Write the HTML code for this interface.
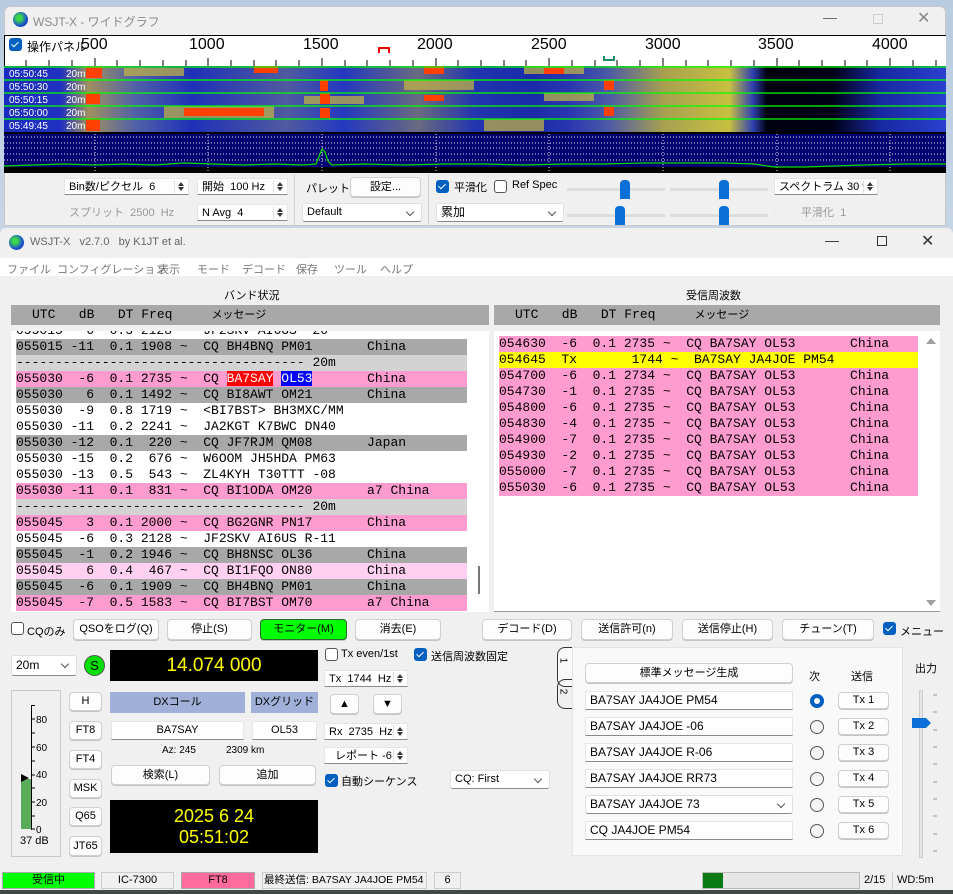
<!DOCTYPE html>
<html style="overflow:hidden"><head><meta charset="utf-8">
<style>
*{box-sizing:border-box;margin:0;padding:0}
body{width:953px;height:894px;overflow:hidden;position:relative;background:linear-gradient(180deg,#b8cbe0,#cfdbe8 40%,#a9bccf);font-family:"Liberation Sans","Noto Sans CJK JP",sans-serif;font-size:11px;color:#000}
.a{position:absolute}
.t{position:absolute;white-space:nowrap}
.btn{position:absolute;background:#fdfdfd;border:1px solid #d0d0d0;border-radius:4px;text-align:center;font-size:11px;line-height:19px;box-shadow:0 1px 0 #c4c4c4;white-space:nowrap;overflow:hidden}
.fld{position:absolute;background:#fff;border:1px solid #e5e5e5;border-bottom:1px solid #8a8a8a;font-size:11px;line-height:16px;padding-left:4px;white-space:nowrap;overflow:hidden}
.spin{position:absolute;right:1px;top:1px;width:13px;bottom:1px;border-left:1px solid #e0e0e0;background:#fff}
.spin:before{content:"";position:absolute;left:3px;top:2px;border:3.5px solid transparent;border-bottom:4px solid #333;border-top:0}
.spin:after{content:"";position:absolute;left:3px;bottom:2px;border:3.5px solid transparent;border-top:4px solid #333;border-bottom:0}
.chk{position:absolute;width:13px;height:13px;border-radius:3px;background:#0060c0}
.chk:after{content:"";position:absolute;left:4px;top:2px;width:3px;height:6px;border:solid #fff;border-width:0 1.5px 1.5px 0;transform:rotate(45deg)}
.unchk{position:absolute;width:13px;height:13px;border-radius:3px;border:1px solid #555;background:#fff}
.cmb{position:absolute;background:#fff;border:1px solid #e0e0e0;border-bottom:1px solid #8a8a8a;border-radius:3px;font-size:11px;line-height:17px;padding-left:4px;white-space:nowrap}
.cmb:after{content:"";position:absolute;right:8px;top:5px;width:5px;height:5px;border:solid #555;border-width:0 1px 1px 0;transform:rotate(45deg)}
.mono{font-family:"Liberation Mono",monospace;font-size:13px;white-space:pre;line-height:16px;height:16px}
.r{position:absolute;left:16px;width:451px}
.rr{position:absolute;left:499px;width:419px}
.gy{background:#a8a8a8}.pk{background:#ff9ccf}.lp{background:#ffd0f0}.sp{background:#d3d3d3}.yl{background:#ffff00}
.m{color:#777;top:261px}
</style></head><body>

<div class="a" style="left:4px;top:6px;width:942px;height:220px;background:#f0f0f0;border:1px solid #c8c8c8;border-radius:6px 6px 0 0"></div>
<div class="a" style="left:13px;top:12px;width:15px;height:15px;border-radius:50%;background:radial-gradient(circle at 40% 40%,#3dd84a 20%,#1a50d0 60%,#102a80)"></div>
<div class="t" style="left:33px;top:13px;color:#8a8a8a;font-size:12px">WSJT-X - ワイドグラフ</div>
<div class="t" style="left:823px;top:9px;color:#666;font-size:14px">—</div>
<div class="a" style="left:873px;top:14px;width:10px;height:10px;border:1px solid #ccc"></div>
<div class="t" style="left:917px;top:8px;color:#888;font-size:16px">✕</div>

<div class="a" style="left:4px;top:35px;width:942px;height:32px;background:#fff;border-top:1px solid #000;border-left:1px solid #000"></div>
<div class="chk" style="left:9px;top:38px"></div>
<div class="t" style="left:27px;top:38px;font-size:12px">操作パネル</div>
<div class="t" style="left:81px;top:36px;font-size:16px">500</div>
<div class="t" style="left:189px;top:36px;font-size:16px">1000</div>
<div class="t" style="left:303px;top:36px;font-size:16px">1500</div>
<div class="t" style="left:417px;top:36px;font-size:16px">2000</div>
<div class="t" style="left:531px;top:36px;font-size:16px">2500</div>
<div class="t" style="left:645px;top:36px;font-size:16px">3000</div>
<div class="t" style="left:758px;top:36px;font-size:16px">3500</div>
<div class="t" style="left:872px;top:36px;font-size:16px">4000</div>
<div class="a" style="left:378px;top:47px;width:12px;height:6px;border:2px solid #e00;border-bottom:0"></div>
<div class="a" style="left:603px;top:56px;width:12px;height:5px;border:2px solid #1a8a60;border-top:0"></div>
<svg class="a" style="left:4px;top:58px" width="942" height="9">
<g stroke="#000" stroke-width="1">
<line x1="22" y1="2" x2="22" y2="9"/><line x1="45" y1="2" x2="45" y2="9"/><line x1="68" y1="2" x2="68" y2="9"/><line x1="91" y1="0" x2="91" y2="9"/><line x1="113" y1="2" x2="113" y2="9"/><line x1="136" y1="2" x2="136" y2="9"/><line x1="159" y1="2" x2="159" y2="9"/><line x1="182" y1="2" x2="182" y2="9"/><line x1="204" y1="0" x2="204" y2="9"/><line x1="227" y1="2" x2="227" y2="9"/><line x1="250" y1="2" x2="250" y2="9"/><line x1="272" y1="2" x2="272" y2="9"/><line x1="295" y1="2" x2="295" y2="9"/><line x1="318" y1="0" x2="318" y2="9"/><line x1="341" y1="2" x2="341" y2="9"/><line x1="363" y1="2" x2="363" y2="9"/><line x1="386" y1="2" x2="386" y2="9"/><line x1="409" y1="2" x2="409" y2="9"/><line x1="432" y1="0" x2="432" y2="9"/><line x1="454" y1="2" x2="454" y2="9"/><line x1="477" y1="2" x2="477" y2="9"/><line x1="500" y1="2" x2="500" y2="9"/><line x1="522" y1="2" x2="522" y2="9"/><line x1="545" y1="0" x2="545" y2="9"/><line x1="568" y1="2" x2="568" y2="9"/><line x1="591" y1="2" x2="591" y2="9"/><line x1="613" y1="2" x2="613" y2="9"/><line x1="636" y1="2" x2="636" y2="9"/><line x1="659" y1="0" x2="659" y2="9"/><line x1="682" y1="2" x2="682" y2="9"/><line x1="704" y1="2" x2="704" y2="9"/><line x1="727" y1="2" x2="727" y2="9"/><line x1="750" y1="2" x2="750" y2="9"/><line x1="773" y1="0" x2="773" y2="9"/><line x1="795" y1="2" x2="795" y2="9"/><line x1="818" y1="2" x2="818" y2="9"/><line x1="841" y1="2" x2="841" y2="9"/><line x1="863" y1="2" x2="863" y2="9"/><line x1="886" y1="0" x2="886" y2="9"/><line x1="909" y1="2" x2="909" y2="9"/><line x1="932" y1="2" x2="932" y2="9"/>
</g></svg>

<svg class="a" style="left:4px;top:66px" width="942" height="107">
<defs>
<linearGradient id="wf" x1="0" x2="1">
<stop offset="0" stop-color="#1a2cc0"/><stop offset="0.06" stop-color="#2030c0"/>
<stop offset="0.09" stop-color="#a09060"/><stop offset="0.14" stop-color="#5060a8"/>
<stop offset="0.2" stop-color="#2030b8"/><stop offset="0.3" stop-color="#505aa0"/>
<stop offset="0.36" stop-color="#2438c0"/><stop offset="0.44" stop-color="#6a6a80"/>
<stop offset="0.5" stop-color="#2234b0"/><stop offset="0.56" stop-color="#1a2aa8"/>
<stop offset="0.6" stop-color="#2a36b0"/><stop offset="0.64" stop-color="#4a58a8"/>
<stop offset="0.7" stop-color="#a8a050"/><stop offset="0.77" stop-color="#c8c040"/>
<stop offset="0.795" stop-color="#3040b0"/><stop offset="0.81" stop-color="#000010"/>
<stop offset="0.88" stop-color="#000018"/><stop offset="0.93" stop-color="#1828a0"/>
<stop offset="1" stop-color="#2a40d0"/></linearGradient>
</defs>
<rect x="0" y="0" width="942" height="66" fill="url(#wf)"/>
<g fill="#c8b840" opacity="0.7">
<rect x="160" y="40" width="110" height="12"/><rect x="400" y="14" width="70" height="10"/><rect x="520" y="0" width="60" height="8"/><rect x="540" y="27" width="50" height="8"/><rect x="120" y="2" width="60" height="8"/><rect x="300" y="30" width="60" height="8"/><rect x="480" y="53" width="60" height="12"/>
</g>
<g fill="#ff4000">
<rect x="82" y="1" width="16" height="11"/><rect x="82" y="27" width="14" height="11"/><rect x="82" y="53" width="14" height="12"/><rect x="180" y="42" width="80" height="8"/><rect x="316" y="27" width="10" height="11"/><rect x="316" y="14" width="8" height="11"/><rect x="316" y="42" width="10" height="10"/><rect x="420" y="0" width="20" height="8"/><rect x="420" y="29" width="20" height="6"/><rect x="540" y="2" width="20" height="6"/><rect x="600" y="14" width="10" height="10"/><rect x="600" y="41" width="10" height="9"/><rect x="250" y="0" width="24" height="7"/>
</g>
<g stroke="#00ff00" stroke-width="1.2"><line x1="0" y1="1" x2="942" y2="1"/><line x1="0" y1="14" x2="942" y2="14"/><line x1="0" y1="27" x2="942" y2="27"/><line x1="0" y1="40" x2="942" y2="40"/><line x1="0" y1="53" x2="942" y2="53"/></g>
<g fill="#fff" font-family="Liberation Sans" font-size="10"><text x="5" y="11">05:50:45</text><text x="5" y="24">05:50:30</text><text x="5" y="37">05:50:15</text><text x="5" y="50">05:50:00</text><text x="5" y="63">05:49:45</text>
<text x="62" y="11">20m</text><text x="62" y="24">20m</text><text x="62" y="37">20m</text><text x="62" y="50">20m</text><text x="62" y="63">20m</text></g>
<rect x="0" y="66" width="942" height="41" fill="#000"/>
<rect x="0" y="68" width="942" height="33" fill="#000070"/>
<g stroke="#fff" stroke-width="1" stroke-dasharray="1,2" opacity="0.9"><line x1="0" y1="71" x2="942" y2="71"/><line x1="0" y1="77" x2="942" y2="77"/><line x1="0" y1="82" x2="942" y2="82"/><line x1="0" y1="88" x2="942" y2="88"/><line x1="0" y1="94" x2="942" y2="94"/>
<line x1="91" y1="68" x2="91" y2="107"/><line x1="204" y1="68" x2="204" y2="107"/><line x1="318" y1="68" x2="318" y2="107"/><line x1="432" y1="68" x2="432" y2="107"/><line x1="545" y1="68" x2="545" y2="107"/><line x1="659" y1="68" x2="659" y2="107"/><line x1="773" y1="68" x2="773" y2="107"/><line x1="886" y1="68" x2="886" y2="107"/></g>
<polyline fill="none" stroke="#00e000" stroke-width="1.2" points="0,100 30,99 60,98 90,99 120,98 150,99 180,97 210,98 240,99 270,98 300,99 312,98 316,88 318,83 321,86 324,95 328,99 360,98 400,99 440,98 480,98 520,99 560,98 600,98 640,97 680,97 720,97 750,98 770,101 800,101 830,100 860,99 900,98 942,98"/>
</svg>

<div class="fld" style="left:64px;top:178px;width:125px;height:17px">Bin数/ピクセル &nbsp;6<span class="spin"></span></div>
<div class="fld" style="left:64px;top:204px;width:125px;height:17px;color:#999;border-color:#f0f0f0;background:#f0f0f0">スプリット &nbsp;2500 &nbsp;Hz</div>
<div class="fld" style="left:197px;top:178px;width:91px;height:17px">開始 &nbsp;100 Hz<span class="spin"></span></div>
<div class="fld" style="left:197px;top:204px;width:91px;height:17px">N Avg &nbsp;4<span class="spin"></span></div>
<div class="a" style="left:294px;top:174px;width:1px;height:52px;background:#d0d0d0"></div>
<div class="t" style="left:306px;top:180px">パレット</div>
<div class="btn" style="left:350px;top:177px;width:71px;height:20px">設定...</div>
<div class="cmb" style="left:302px;top:203px;width:120px;height:19px">Default</div>
<div class="a" style="left:428px;top:174px;width:1px;height:52px;background:#d0d0d0"></div>
<div class="chk" style="left:436px;top:180px"></div>
<div class="t" style="left:454px;top:179px">平滑化</div>
<div class="unchk" style="left:494px;top:180px"></div>
<div class="t" style="left:512px;top:179px">Ref Spec</div>
<div class="cmb" style="left:436px;top:203px;width:128px;height:19px;font-size:12px">累加</div>
<div class="a" style="left:567px;top:188px;width:98px;height:3px;background:#ddd"></div>
<div class="a" style="left:670px;top:188px;width:98px;height:3px;background:#ddd"></div>
<div class="a" style="left:567px;top:214px;width:98px;height:3px;background:#ddd"></div>
<div class="a" style="left:670px;top:214px;width:98px;height:3px;background:#ddd"></div>
<div class="a" style="left:620px;top:180px;width:10px;height:19px;background:#0a6fd6;border-radius:4px 4px 0 0"></div>
<div class="a" style="left:719px;top:180px;width:10px;height:19px;background:#0a6fd6;border-radius:4px 4px 0 0"></div>
<div class="a" style="left:615px;top:206px;width:10px;height:19px;background:#0a6fd6;border-radius:4px 4px 0 0"></div>
<div class="a" style="left:719px;top:206px;width:10px;height:19px;background:#0a6fd6;border-radius:4px 4px 0 0"></div>
<div class="fld" style="left:774px;top:178px;width:104px;height:17px">スペクトラム 30 %<span class="spin"></span></div>
<div class="fld" style="left:774px;top:204px;width:104px;height:17px;color:#999;background:#f0f0f0;border-color:#ececec;padding-left:26px">平滑化 &nbsp;1</div>

<div class="a" style="left:0;top:228px;width:953px;height:666px;background:#f0f0f0;border-radius:6px 6px 0 0"></div>
<div class="a" style="left:9px;top:235px;width:15px;height:15px;border-radius:50%;background:radial-gradient(circle at 40% 40%,#3dd84a 20%,#1a50d0 60%,#102a80)"></div>
<div class="t" style="left:30px;top:236px;color:#666;font-size:11px">WSJT-X &nbsp; v2.7.0 &nbsp; by K1JT et al.</div>
<div class="t" style="left:825px;top:232px;color:#333;font-size:14px">—</div>
<div class="a" style="left:877px;top:236px;width:10px;height:10px;border:1px solid #333"></div>
<div class="t" style="left:921px;top:231px;color:#333;font-size:16px">✕</div>
<div class="a" style="left:0;top:258px;width:953px;height:18px;background:#fff"></div>
<div class="t m" style="left:7px">ファイル</div>
<div class="t m" style="left:57px">コンフィグレーション</div>
<div class="t m" style="left:158px">表示</div>
<div class="t m" style="left:197px">モード</div>
<div class="t m" style="left:242px">デコード</div>
<div class="t m" style="left:296px">保存</div>
<div class="t m" style="left:334px">ツール</div>
<div class="t m" style="left:380px">ヘルプ</div>

<div class="t" style="left:224px;top:287px">バンド状況</div>
<div class="t" style="left:686px;top:287px">受信周波数</div>
<div class="a mono" style="left:11px;top:305px;width:478px;height:20px;background:#a8a8a8;line-height:20px;padding-left:21px">UTC   dB   DT Freq     <span style="font-family:'Liberation Sans','Noto Sans CJK JP',sans-serif;font-size:11px">メッセージ</span></div>
<div class="a mono" style="left:494px;top:305px;width:446px;height:20px;background:#a8a8a8;line-height:20px;padding-left:21px">UTC   dB   DT Freq     <span style="font-family:'Liberation Sans','Noto Sans CJK JP',sans-serif;font-size:11px">メッセージ</span></div>

<div class="a" style="left:11px;top:331px;width:478px;height:281px;background:#fff;overflow:hidden">
<div style="position:absolute;left:-11px;top:-331px;width:500px;height:1000px">
<div class="r mono" style="top:323px">055015  -6  0.3 2128 ~  JF2SKV AI6US  20</div>
<div class="r mono gy" style="top:339px">055015 -11  0.1 1908 ~  CQ BH4BNQ PM01       China</div>
<div class="r mono sp" style="top:355px">------------------------------------- 20m</div>
<div class="r mono pk" style="top:371px">055030  -6  0.1 2735 ~  CQ <span style="background:#f00;color:#fff">BA7SAY</span> <span style="background:#00f;color:#fff">OL53</span>       China</div>
<div class="r mono gy" style="top:387px">055030   6  0.1 1492 ~  CQ BI8AWT OM21       China</div>
<div class="r mono" style="top:403px">055030  -9  0.8 1719 ~  &lt;BI7BST&gt; BH3MXC/MM</div>
<div class="r mono" style="top:419px">055030 -11  0.2 2241 ~  JA2KGT K7BWC DN40</div>
<div class="r mono gy" style="top:435px">055030 -12  0.1  220 ~  CQ JF7RJM QM08       Japan</div>
<div class="r mono" style="top:451px">055030 -15  0.2  676 ~  W6OOM JH5HDA PM63</div>
<div class="r mono" style="top:467px">055030 -13  0.5  543 ~  ZL4KYH T30TTT -08</div>
<div class="r mono pk" style="top:483px">055030 -11  0.1  831 ~  CQ BI1ODA OM20       a7 China</div>
<div class="r mono sp" style="top:499px">------------------------------------- 20m</div>
<div class="r mono pk" style="top:515px">055045   3  0.1 2000 ~  CQ BG2GNR PN17       China</div>
<div class="r mono" style="top:531px">055045  -6  0.3 2128 ~  JF2SKV AI6US R-11</div>
<div class="r mono gy" style="top:547px">055045  -1  0.2 1946 ~  CQ BH8NSC OL36       China</div>
<div class="r mono lp" style="top:563px">055045   6  0.4  467 ~  CQ BI1FQO ON80       China</div>
<div class="r mono gy" style="top:579px">055045  -6  0.1 1909 ~  CQ BH4BNQ PM01       China</div>
<div class="r mono pk" style="top:595px">055045  -7  0.5 1583 ~  CQ BI7BST OM70       a7 China</div>
</div>
<div class="a" style="left:467px;top:235px;width:2px;height:28px;background:#777"></div>
</div>

<div class="a" style="left:494px;top:331px;width:446px;height:281px;background:#fff;border-bottom:1px solid #999"></div>
<div class="rr mono pk" style="top:336px">054630  -6  0.1 2735 ~  CQ BA7SAY OL53       China</div>
<div class="rr mono yl" style="top:352px">054645  Tx       1744 ~  BA7SAY JA4JOE PM54</div>
<div class="rr mono pk" style="top:368px">054700  -6  0.1 2734 ~  CQ BA7SAY OL53       China</div>
<div class="rr mono pk" style="top:384px">054730  -1  0.1 2735 ~  CQ BA7SAY OL53       China</div>
<div class="rr mono pk" style="top:400px">054800  -6  0.1 2735 ~  CQ BA7SAY OL53       China</div>
<div class="rr mono pk" style="top:416px">054830  -4  0.1 2735 ~  CQ BA7SAY OL53       China</div>
<div class="rr mono pk" style="top:432px">054900  -7  0.1 2735 ~  CQ BA7SAY OL53       China</div>
<div class="rr mono pk" style="top:448px">054930  -2  0.1 2735 ~  CQ BA7SAY OL53       China</div>
<div class="rr mono pk" style="top:464px">055000  -7  0.1 2735 ~  CQ BA7SAY OL53       China</div>
<div class="rr mono pk" style="top:480px">055030  -6  0.1 2735 ~  CQ BA7SAY OL53       China</div>
<div class="a" style="left:926px;top:338px;border:5px solid transparent;border-bottom:6px solid #a0a0a0;border-top:0"></div>
<div class="a" style="left:926px;top:600px;border:5px solid transparent;border-top:6px solid #a0a0a0;border-bottom:0"></div>

<div class="unchk" style="left:11px;top:622px"></div>
<div class="t" style="left:27px;top:623px">CQのみ</div>
<div class="btn" style="left:73px;top:619px;width:86px;height:21px">QSOをログ(Q)</div>
<div class="btn" style="left:167px;top:619px;width:85px;height:21px">停止(S)</div>
<div class="btn" style="left:260px;top:619px;width:87px;height:21px;background:#00ff00;border:1px solid #2a6a2a">モニター(M)</div>
<div class="btn" style="left:355px;top:619px;width:86px;height:21px">消去(E)</div>
<div class="btn" style="left:482px;top:619px;width:90px;height:21px">デコード(D)</div>
<div class="btn" style="left:581px;top:619px;width:92px;height:21px">送信許可(n)</div>
<div class="btn" style="left:682px;top:619px;width:91px;height:21px">送信停止(H)</div>
<div class="btn" style="left:782px;top:619px;width:92px;height:21px">チューン(T)</div>
<div class="chk" style="left:883px;top:622px"></div>
<div class="t" style="left:900px;top:623px">メニュー</div>

<div class="cmb" style="left:11px;top:655px;width:66px;height:21px;line-height:19px;font-size:12px">20m</div>
<div class="a" style="left:84px;top:655px;width:21px;height:21px;border-radius:50%;background:#00e000;border:1px solid #555;text-align:center;line-height:19px;font-size:13px">S</div>
<div class="a" style="left:110px;top:650px;width:208px;height:31px;background:#000;color:#ffff00;font-size:19px;text-align:center;line-height:31px">14.074 000</div>
<div class="a" style="left:11px;top:690px;width:50px;height:167px;border:1px solid #c8c8c8;background:#f0f0f0"></div>
<div class="a" style="left:21px;top:779px;width:10px;height:50px;background:#5aab5a"></div>
<div class="a" style="left:21px;top:774px;border:4px solid transparent;border-left:8px solid #000"></div>
<div class="a" style="left:31px;top:705px;width:1px;height:125px;background:#000"></div>
<svg class="a" style="left:31px;top:705px" width="30" height="130"><g stroke="#000"><line x1="0" y1="0.5" x2="4" y2="0.5"/><line x1="0" y1="14" x2="4" y2="14"/><line x1="0" y1="28" x2="4" y2="28"/><line x1="0" y1="42" x2="4" y2="42"/><line x1="0" y1="56" x2="4" y2="56"/><line x1="0" y1="70" x2="4" y2="70"/><line x1="0" y1="83" x2="4" y2="83"/><line x1="0" y1="97" x2="4" y2="97"/><line x1="0" y1="111" x2="4" y2="111"/><line x1="0" y1="124" x2="4" y2="124"/></g>
<g font-family="Liberation Sans" font-size="10"><text x="5" y="18">80</text><text x="5" y="46">60</text><text x="5" y="73">40</text><text x="5" y="101">20</text><text x="5" y="128">0</text></g></svg>
<div class="t" style="left:20px;top:835px">37 dB</div>
<div class="btn" style="left:69px;top:692px;width:33px;height:19px;line-height:17px">H</div>
<div class="btn" style="left:69px;top:721px;width:33px;height:19px;line-height:17px">FT8</div>
<div class="btn" style="left:69px;top:750px;width:33px;height:19px;line-height:17px">FT4</div>
<div class="btn" style="left:69px;top:779px;width:33px;height:19px;line-height:17px">MSK</div>
<div class="btn" style="left:69px;top:807px;width:33px;height:19px;line-height:17px">Q65</div>
<div class="btn" style="left:69px;top:836px;width:33px;height:20px;line-height:18px">JT65</div>
<div class="a" style="left:110px;top:692px;width:135px;height:21px;background:#a0b0d8;text-align:center;line-height:21px">DXコール</div>
<div class="a" style="left:251px;top:692px;width:67px;height:21px;background:#a0b0d8;text-align:center;line-height:21px">DXグリッド</div>
<div class="fld" style="left:111px;top:721px;width:133px;height:19px;text-align:center;padding:0">BA7SAY</div>
<div class="fld" style="left:252px;top:721px;width:65px;height:19px;text-align:center;padding:0">OL53</div>
<div class="t" style="left:162px;top:745px;font-size:10px">Az: 245</div>
<div class="t" style="left:226px;top:745px;font-size:10px">2309 km</div>
<div class="btn" style="left:111px;top:765px;width:99px;height:20px">検索(L)</div>
<div class="btn" style="left:219px;top:765px;width:97px;height:20px">追加</div>
<div class="a" style="left:110px;top:800px;width:208px;height:53px;background:#000;color:#ffff00;font-size:18px;text-align:center;line-height:21px;padding-top:6px">2025 6 24<br>05:51:02</div>

<div class="unchk" style="left:325px;top:648px"></div>
<div class="t" style="left:341px;top:648px">Tx even/1st</div>
<div class="chk" style="left:414px;top:648px"></div>
<div class="t" style="left:431px;top:648px">送信周波数固定</div>
<div class="fld" style="left:324px;top:670px;width:84px;height:17px">Tx &nbsp;1744 &nbsp;Hz<span class="spin"></span></div>
<div class="btn" style="left:330px;top:694px;width:29px;height:20px;font-size:11px">▲</div>
<div class="btn" style="left:373px;top:694px;width:29px;height:20px;font-size:11px">▼</div>
<div class="fld" style="left:324px;top:723px;width:84px;height:17px">Rx &nbsp;2735 &nbsp;Hz<span class="spin"></span></div>
<div class="fld" style="left:324px;top:747px;width:84px;height:17px;padding-left:10px">レポート -6<span class="spin"></span></div>
<div class="chk" style="left:325px;top:774px"></div>
<div class="t" style="left:341px;top:773px">自動シーケンス</div>
<div class="cmb" style="left:450px;top:770px;width:100px;height:19px">CQ: First</div>

<div class="a" style="left:557px;top:647px;width:15px;height:40px;border:1px solid #333;border-right:0;border-radius:8px 0 0 8px;background:#f9f9f9"></div>
<div class="a" style="left:557px;top:679px;width:15px;height:30px;border:1px solid #333;border-right:0;border-radius:8px 0 0 8px"></div>
<div class="t" style="left:560px;top:655px;font-size:10px;transform:rotate(90deg)">1</div>
<div class="t" style="left:560px;top:686px;font-size:10px;transform:rotate(90deg)">2</div>
<div class="a" style="left:572px;top:647px;width:331px;height:209px;background:#f9f9f9;border:1px solid #e4e4e4"></div>
<div class="btn" style="left:585px;top:663px;width:208px;height:20px">標準メッセージ生成</div>
<div class="t" style="left:809px;top:668px">次</div>
<div class="t" style="left:851px;top:668px">送信</div>
<div class="fld" style="left:585px;top:691px;width:208px;height:19px;font-size:12px">BA7SAY JA4JOE PM54</div>
<div class="fld" style="left:585px;top:717px;width:208px;height:19px;font-size:12px">BA7SAY JA4JOE -06</div>
<div class="fld" style="left:585px;top:743px;width:208px;height:19px;font-size:12px">BA7SAY JA4JOE R-06</div>
<div class="fld" style="left:585px;top:769px;width:208px;height:19px;font-size:12px">BA7SAY JA4JOE RR73</div>
<div class="cmb" style="left:585px;top:795px;width:208px;height:19px;font-size:12px">BA7SAY JA4JOE 73</div>
<div class="fld" style="left:585px;top:821px;width:208px;height:19px;font-size:12px">CQ JA4JOE PM54</div>
<div class="a" style="left:810px;top:694px;width:14px;height:14px;border-radius:50%;background:#0060c0"><div style="position:absolute;left:4px;top:4px;width:6px;height:6px;border-radius:50%;background:#fff"></div></div>
<div class="a" style="left:810px;top:720px;width:14px;height:14px;border-radius:50%;border:1px solid #555;background:#f5f5f5"></div>
<div class="a" style="left:810px;top:746px;width:14px;height:14px;border-radius:50%;border:1px solid #555;background:#f5f5f5"></div>
<div class="a" style="left:810px;top:772px;width:14px;height:14px;border-radius:50%;border:1px solid #555;background:#f5f5f5"></div>
<div class="a" style="left:810px;top:798px;width:14px;height:14px;border-radius:50%;border:1px solid #555;background:#f5f5f5"></div>
<div class="a" style="left:810px;top:824px;width:14px;height:14px;border-radius:50%;border:1px solid #555;background:#f5f5f5"></div>
<div class="btn" style="left:838px;top:692px;width:51px;height:17px;line-height:15px">Tx 1</div>
<div class="btn" style="left:838px;top:718px;width:51px;height:17px;line-height:15px">Tx 2</div>
<div class="btn" style="left:838px;top:744px;width:51px;height:17px;line-height:15px">Tx 3</div>
<div class="btn" style="left:838px;top:770px;width:51px;height:17px;line-height:15px">Tx 4</div>
<div class="btn" style="left:838px;top:796px;width:51px;height:17px;line-height:15px">Tx 5</div>
<div class="btn" style="left:838px;top:822px;width:51px;height:17px;line-height:15px">Tx 6</div>
<div class="t" style="left:915px;top:660px">出力</div>
<div class="a" style="left:919px;top:690px;width:4px;height:168px;background:#e6e6e6;border:1px solid #ccc"></div>
<svg class="a" style="left:930px;top:690px" width="10" height="170"><g stroke="#999"><line x1="3" y1="5" x2="7" y2="5"/><line x1="3" y1="22" x2="7" y2="22"/><line x1="3" y1="40" x2="7" y2="40"/><line x1="3" y1="57" x2="7" y2="57"/><line x1="3" y1="74" x2="7" y2="74"/><line x1="3" y1="92" x2="7" y2="92"/><line x1="3" y1="109" x2="7" y2="109"/><line x1="3" y1="126" x2="7" y2="126"/><line x1="3" y1="144" x2="7" y2="144"/><line x1="3" y1="161" x2="7" y2="161"/></g></svg>
<svg class="a" style="left:912px;top:717px" width="20" height="12"><path d="M0 1 H14 L19 6 L14 11 H0 Z" fill="#0a6fd6"/></svg>

<div class="a" style="left:2px;top:872px;width:93px;height:17px;background:#00ff00;border:1px solid #aaa;text-align:center;line-height:15px">受信中</div>
<div class="a" style="left:101px;top:872px;width:73px;height:17px;border:1px solid #ccc;text-align:center;line-height:15px">IC-7300</div>
<div class="a" style="left:181px;top:872px;width:74px;height:17px;background:#ff6b9d;border:1px solid #aaa;text-align:center;line-height:15px">FT8</div>
<div class="a" style="left:262px;top:872px;width:165px;height:17px;border:1px solid #ccc;line-height:15px;padding-left:1px;white-space:nowrap;overflow:hidden;font-size:10.5px">最終送信: BA7SAY JA4JOE PM54</div>
<div class="a" style="left:434px;top:872px;width:27px;height:17px;border:1px solid #ccc;text-align:center;line-height:15px">6</div>
<div class="a" style="left:702px;top:872px;width:158px;height:17px;background:#e6e6e6;border:1px solid #bbb"><div style="width:20px;height:15px;background:#0a7a14"></div></div>
<div class="t" style="left:864px;top:874px">2/15</div>
<div class="a" style="left:892px;top:872px;width:1px;height:17px;background:#ccc"></div>
<div class="t" style="left:897px;top:874px">WD:5m</div>
<div class="a" style="left:0;top:890px;width:953px;height:4px;background:#404848"></div>
</body></html>
